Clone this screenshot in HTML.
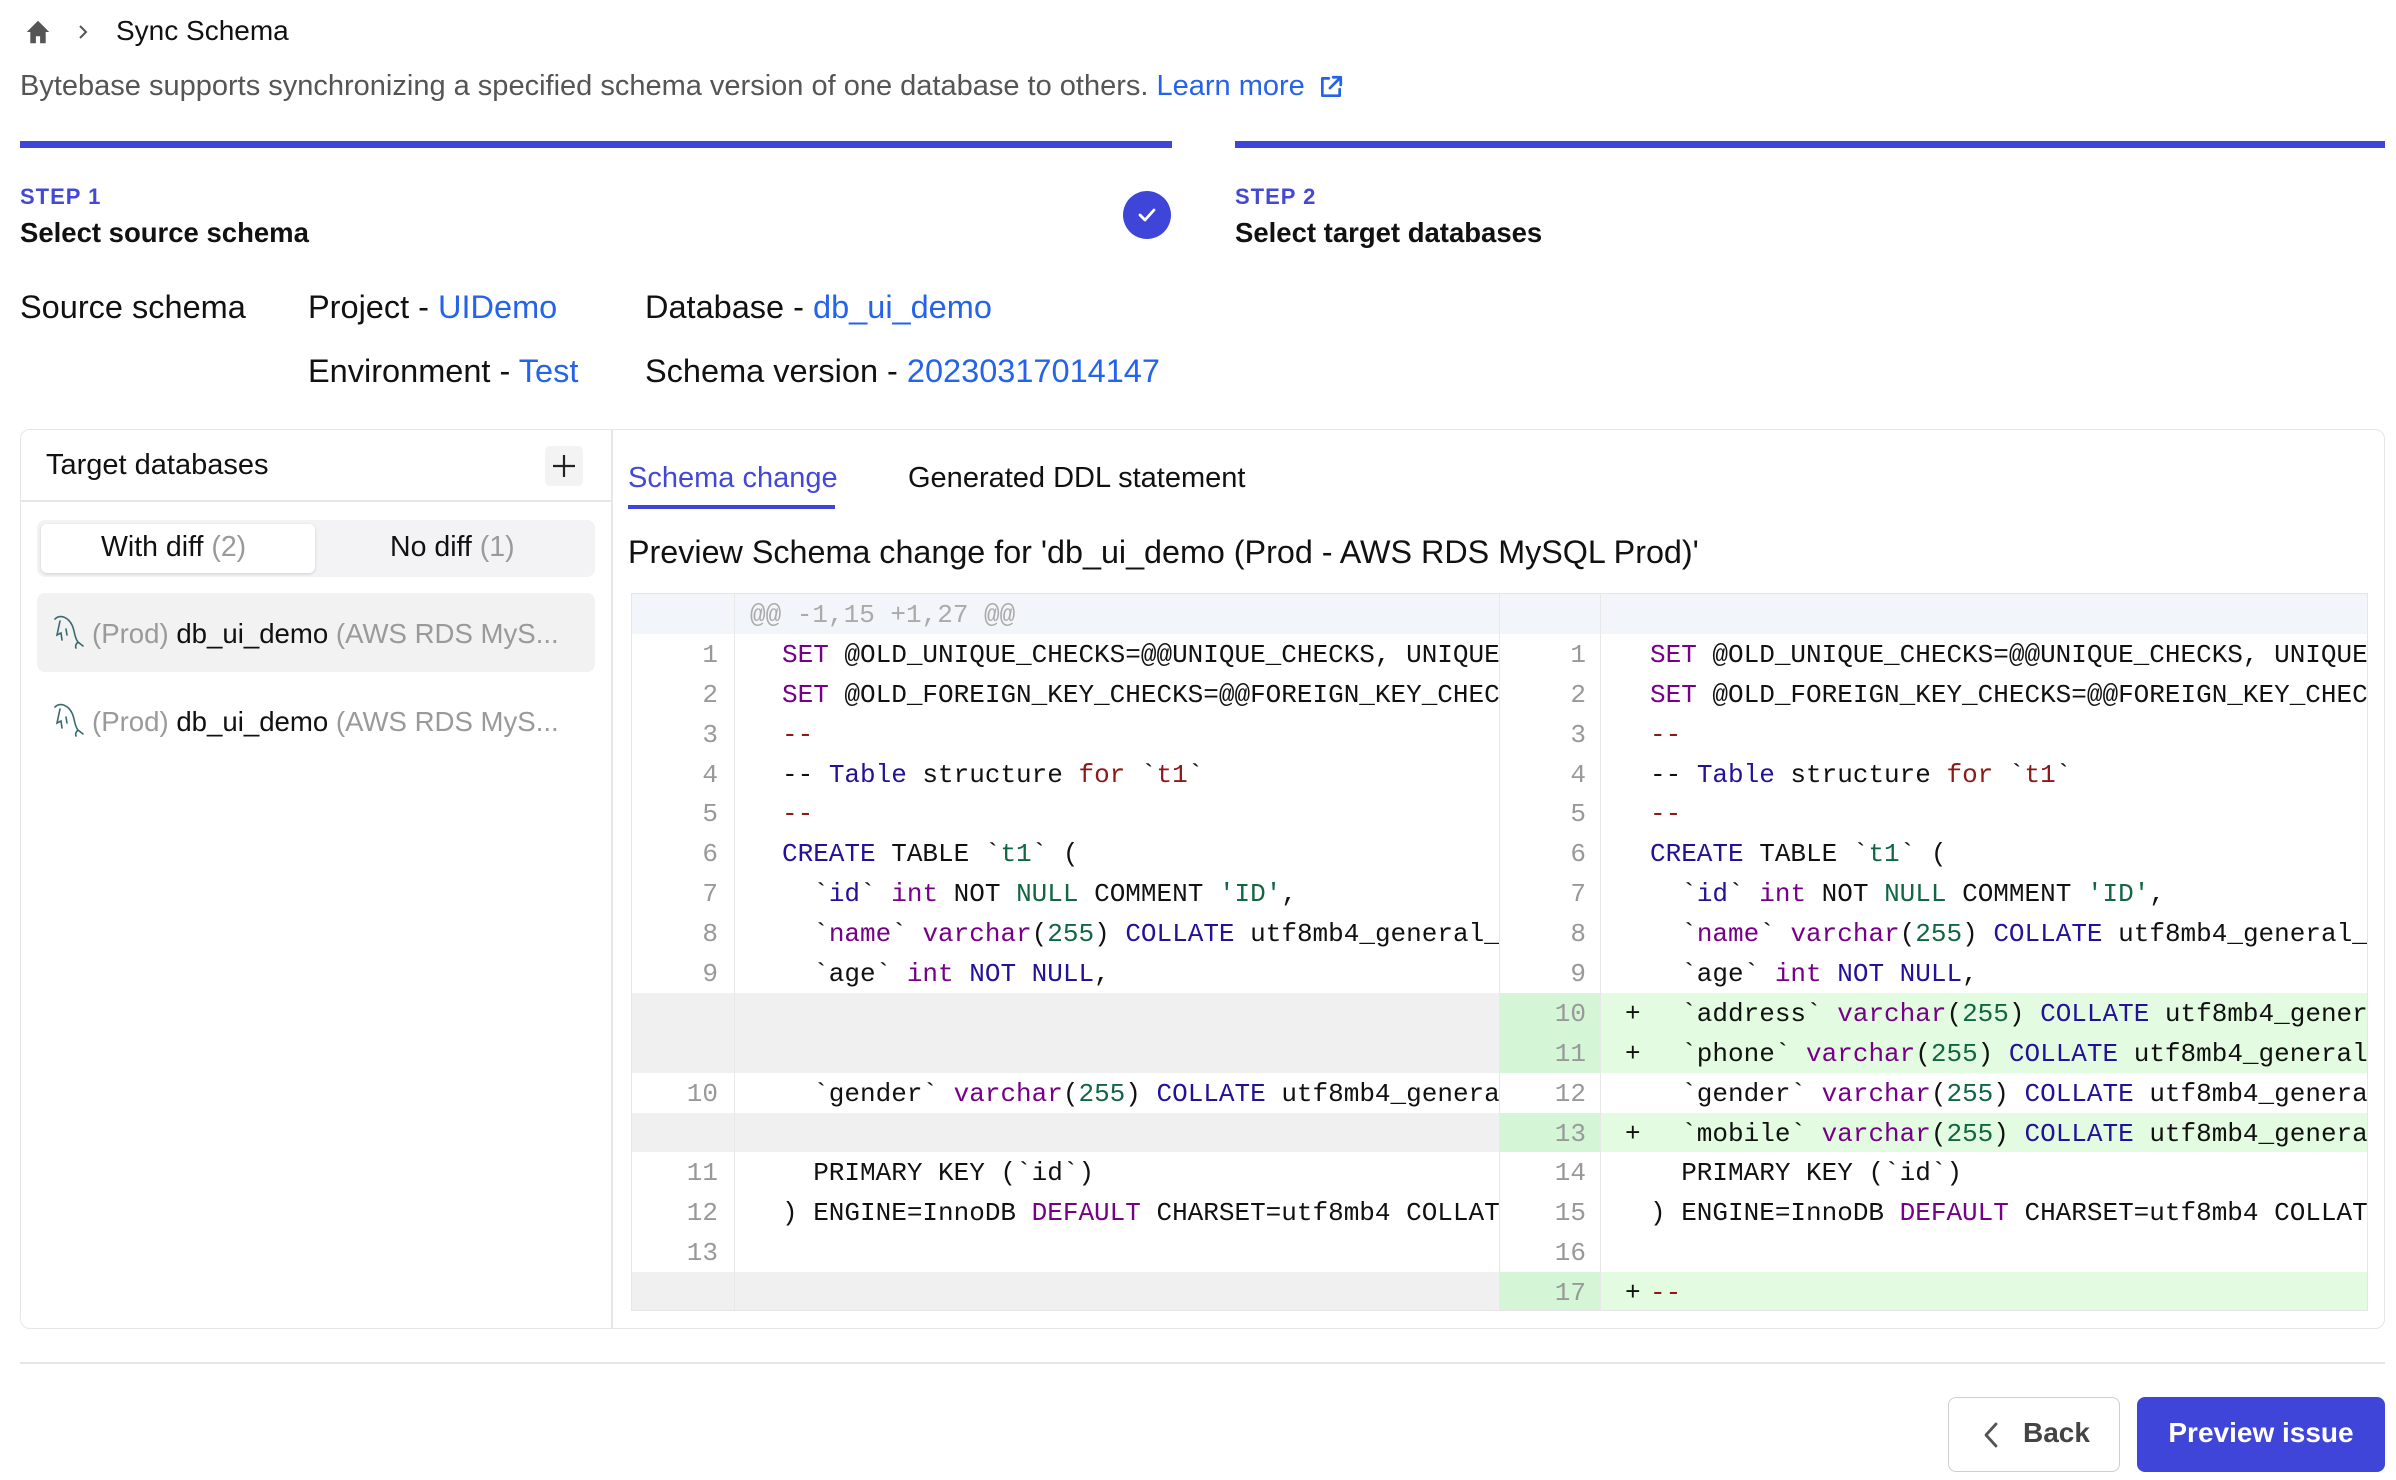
<!DOCTYPE html>
<html><head><meta charset="utf-8">
<style>
*{box-sizing:border-box;margin:0;padding:0}
body{width:2396px;height:1480px;background:#fff;font-family:"Liberation Sans",sans-serif;color:#111;position:relative;overflow:hidden}
.a{position:absolute;white-space:nowrap}
.blue{color:#2563eb}
.gray{color:#9a9a9a}
.code{position:absolute;left:631px;top:593px;width:1737px;height:718px;border:1px solid #e6e6e6;overflow:hidden;font-family:"Liberation Mono","DejaVu Sans Mono",monospace;font-size:26px}
.row{position:relative;height:39.9px;line-height:42px}
.c{position:absolute;top:0;height:100%;overflow:hidden;white-space:pre}
.gl{left:0;width:103px;text-align:right;padding-right:16px;color:#999;border-right:1px solid #e8e8e8}
.cl{left:103px;width:765px;padding-left:47px;border-right:1px solid #e8e8e8}
.gr{left:868px;width:101px;text-align:right;padding-right:14px;color:#999;border-right:1px solid #e8e8e8}
.cr{left:969px;width:770px;padding-left:49px}
.mk{position:absolute;left:24px}
.e{background:#f0f0f0}
.gG{background:#d4f5d6}
.cG{background:#e3fbe0}
.k{color:#770088}.b{color:#221199}.n{color:#116644}.s{color:#aa1111}.t{color:#116644}.d{color:#8b1a1a}
</style></head><body>

<svg class="a" style="left:24px;top:18px" width="28" height="28" viewBox="0 0 20 20"><path d="M10 2 L2 10 H4.5 V18 H8.5 V13 H11.5 V18 H15.5 V10 H18 Z" fill="#555"/></svg>
<svg class="a" style="left:76px;top:22px" width="14" height="20" viewBox="0 0 14 20"><path d="M4 4 L10 10 L4 16" stroke="#555" stroke-width="2" fill="none"/></svg>
<div class="a" style="left:116px;top:15px;font-size:28px">Sync Schema</div>

<div class="a" style="left:20px;top:70px;font-size:29px;color:#555">Bytebase supports synchronizing a specified schema version of one database to others. <span class="blue">Learn more</span></div>
<svg class="a" style="left:1318px;top:74px" width="26" height="26" viewBox="0 0 24 24"><path d="M10 4 H4 V20 H20 V14 M14 3 H21 V10 M21 3 L11 13" stroke="#2563eb" stroke-width="2.5" fill="none" stroke-linecap="round" stroke-linejoin="round"/></svg>

<div class="a" style="left:20px;top:141px;width:1152px;height:7px;background:#3f45d8"></div>
<div class="a" style="left:1235px;top:141px;width:1150px;height:7px;background:#3f45d8"></div>
<div class="a" style="left:20px;top:184px;font-size:22px;font-weight:bold;color:#4448d6;letter-spacing:1px">STEP 1</div>
<div class="a" style="left:20px;top:217px;font-size:27.5px;font-weight:bold">Select source schema</div>
<div class="a" style="left:1123px;top:191px;width:48px;height:48px;border-radius:50%;background:#3f45d8"></div>
<svg class="a" style="left:1135px;top:203px" width="24" height="24" viewBox="0 0 24 24"><path d="M5 12 L10 17 L19 7" stroke="#fff" stroke-width="2.8" fill="none" stroke-linecap="round" stroke-linejoin="round"/></svg>
<div class="a" style="left:1235px;top:184px;font-size:22px;font-weight:bold;color:#4448d6;letter-spacing:1px">STEP 2</div>
<div class="a" style="left:1235px;top:217px;font-size:27.5px;font-weight:bold">Select target databases</div>

<div class="a" style="left:20px;top:289px;font-size:32.5px">Source schema</div>
<div class="a" style="left:308px;top:289px;font-size:32.5px">Project - <span class="blue">UIDemo</span></div>
<div class="a" style="left:645px;top:289px;font-size:32.5px">Database - <span class="blue">db_ui_demo</span></div>
<div class="a" style="left:308px;top:353px;font-size:32.5px">Environment - <span class="blue">Test</span></div>
<div class="a" style="left:645px;top:353px;font-size:32.5px">Schema version - <span class="blue">20230317014147</span></div>

<div class="a" style="left:20px;top:429px;width:2365px;height:900px;border:1.5px solid #e6e6e6;border-radius:10px"></div>
<div class="a" style="left:611px;top:430px;width:1.5px;height:898px;background:#e6e6e6"></div>
<div class="a" style="left:21px;top:500px;width:590px;height:2px;background:#e6e6e6"></div>
<div class="a" style="left:46px;top:449px;font-size:29px">Target databases</div>
<div class="a" style="left:545px;top:446px;width:38px;height:40px;border-radius:5px;background:#f3f3f3"></div>
<svg class="a" style="left:551px;top:453px" width="26" height="26" viewBox="0 0 26 26"><path d="M13 2 V24 M2 13 H24" stroke="#222" stroke-width="2.2"/></svg>

<div class="a" style="left:37px;top:520px;width:558px;height:57px;border-radius:8px;background:#f3f3f5"></div>
<div class="a" style="left:41px;top:524px;width:274px;height:49px;border-radius:6px;background:#fff;box-shadow:0 1px 3px rgba(0,0,0,.15)"></div>
<div class="a" style="left:101px;top:531px;font-size:28.5px">With diff <span class="gray">(2)</span></div>
<div class="a" style="left:390px;top:531px;font-size:28.5px">No diff <span class="gray">(1)</span></div>

<div class="a" style="left:37px;top:593px;width:558px;height:79px;border-radius:8px;background:#f2f2f3"></div>
<svg class="a" style="left:52px;top:613px" width="36" height="36" viewBox="0 0 36 36"><path d="M3 6 C8 1 16 4 20 12 C23 18 22 24 26 29 L31 33 M26 29 C24 31 23 33 24 35 M8 8 L5 22 L9 20 L10 27 M14 16 L15 22" stroke="#3a6a70" stroke-width="1.6" fill="none" stroke-linecap="round"/></svg>
<div class="a" style="left:92px;top:618px;font-size:27.6px"><span class="gray">(Prod)</span> db_ui_demo <span class="gray">(AWS RDS MyS...</span></div>
<svg class="a" style="left:52px;top:701px" width="36" height="36" viewBox="0 0 36 36"><path d="M3 6 C8 1 16 4 20 12 C23 18 22 24 26 29 L31 33 M26 29 C24 31 23 33 24 35 M8 8 L5 22 L9 20 L10 27 M14 16 L15 22" stroke="#3a6a70" stroke-width="1.6" fill="none" stroke-linecap="round"/></svg>
<div class="a" style="left:92px;top:706px;font-size:27.6px"><span class="gray">(Prod)</span> db_ui_demo <span class="gray">(AWS RDS MyS...</span></div>

<div class="a" style="left:628px;top:462px;font-size:29px;color:#4448d6">Schema change</div>
<div class="a" style="left:628px;top:505px;width:207px;height:4px;background:#3f45d8"></div>
<div class="a" style="left:908px;top:462px;font-size:29px">Generated DDL statement</div>
<div class="a" style="left:628px;top:534px;font-size:32.3px">Preview Schema change for 'db_ui_demo (Prod - AWS RDS MySQL Prod)'</div>

<div class="code">
<div class="row" style="background:#f2f5fa"><div class="c gl"></div><div class="c cl" style="padding-left:15px;color:#aaa">@@ -1,15 +1,27 @@</div><div class="c gr"></div><div class="c cr"></div></div>
<div class="row"><div class="c gl">1</div><div class="c cl"><span class="k">SET</span> @OLD_UNIQUE_CHECKS=@@UNIQUE_CHECKS, UNIQUE_CHECKS=0;</div><div class="c gr">1</div><div class="c cr"><span class="k">SET</span> @OLD_UNIQUE_CHECKS=@@UNIQUE_CHECKS, UNIQUE_CHECKS=0;</div></div>
<div class="row"><div class="c gl">2</div><div class="c cl"><span class="k">SET</span> @OLD_FOREIGN_KEY_CHECKS=@@FOREIGN_KEY_CHECKS, FOREIGN</div><div class="c gr">2</div><div class="c cr"><span class="k">SET</span> @OLD_FOREIGN_KEY_CHECKS=@@FOREIGN_KEY_CHECKS, FOREIGN</div></div>
<div class="row"><div class="c gl">3</div><div class="c cl"><span class="d">--</span></div><div class="c gr">3</div><div class="c cr"><span class="d">--</span></div></div>
<div class="row"><div class="c gl">4</div><div class="c cl">-- <span class="b">Table</span> structure <span class="d">for</span> `<span class="d">t1</span>`</div><div class="c gr">4</div><div class="c cr">-- <span class="b">Table</span> structure <span class="d">for</span> `<span class="d">t1</span>`</div></div>
<div class="row"><div class="c gl">5</div><div class="c cl"><span class="d">--</span></div><div class="c gr">5</div><div class="c cr"><span class="d">--</span></div></div>
<div class="row"><div class="c gl">6</div><div class="c cl"><span class="b">CREATE</span> TABLE `<span class="t">t1</span>` (</div><div class="c gr">6</div><div class="c cr"><span class="b">CREATE</span> TABLE `<span class="t">t1</span>` (</div></div>
<div class="row"><div class="c gl">7</div><div class="c cl">  `<span class="b">id</span>` <span class="k">int</span> NOT <span class="n">NULL</span> COMMENT <span class="n">'ID'</span>,</div><div class="c gr">7</div><div class="c cr">  `<span class="b">id</span>` <span class="k">int</span> NOT <span class="n">NULL</span> COMMENT <span class="n">'ID'</span>,</div></div>
<div class="row"><div class="c gl">8</div><div class="c cl">  `<span class="k">name</span>` <span class="k">varchar</span>(<span class="n">255</span>) <span class="b">COLLATE</span> utf8mb4_general_ci</div><div class="c gr">8</div><div class="c cr">  `<span class="k">name</span>` <span class="k">varchar</span>(<span class="n">255</span>) <span class="b">COLLATE</span> utf8mb4_general_ci</div></div>
<div class="row"><div class="c gl">9</div><div class="c cl">  `age` <span class="k">int</span> <span class="b">NOT NULL</span>,</div><div class="c gr">9</div><div class="c cr">  `age` <span class="k">int</span> <span class="b">NOT NULL</span>,</div></div>
<div class="row"><div class="c gl e"></div><div class="c cl e"></div><div class="c gr gG">10</div><div class="c cr cG"><span class="mk">+</span>  `address` <span class="k">varchar</span>(<span class="n">255</span>) <span class="b">COLLATE</span> utf8mb4_general_ci</div></div>
<div class="row"><div class="c gl e"></div><div class="c cl e"></div><div class="c gr gG">11</div><div class="c cr cG"><span class="mk">+</span>  `phone` <span class="k">varchar</span>(<span class="n">255</span>) <span class="b">COLLATE</span> utf8mb4_general_ci</div></div>
<div class="row"><div class="c gl">10</div><div class="c cl">  `gender` <span class="k">varchar</span>(<span class="n">255</span>) <span class="b">COLLATE</span> utf8mb4_general_ci</div><div class="c gr">12</div><div class="c cr">  `gender` <span class="k">varchar</span>(<span class="n">255</span>) <span class="b">COLLATE</span> utf8mb4_general_ci</div></div>
<div class="row"><div class="c gl e"></div><div class="c cl e"></div><div class="c gr gG">13</div><div class="c cr cG"><span class="mk">+</span>  `mobile` <span class="k">varchar</span>(<span class="n">255</span>) <span class="b">COLLATE</span> utf8mb4_general_ci</div></div>
<div class="row"><div class="c gl">11</div><div class="c cl">  PRIMARY KEY (`id`)</div><div class="c gr">14</div><div class="c cr">  PRIMARY KEY (`id`)</div></div>
<div class="row"><div class="c gl">12</div><div class="c cl">) ENGINE=InnoDB <span class="k">DEFAULT</span> CHARSET=utf8mb4 COLLATE=utf8mb4</div><div class="c gr">15</div><div class="c cr">) ENGINE=InnoDB <span class="k">DEFAULT</span> CHARSET=utf8mb4 COLLATE=utf8mb4</div></div>
<div class="row"><div class="c gl">13</div><div class="c cl"></div><div class="c gr">16</div><div class="c cr"></div></div>
<div class="row"><div class="c gl e"></div><div class="c cl e"></div><div class="c gr gG">17</div><div class="c cr cG"><span class="mk">+</span><span class="d">--</span></div></div>
</div>

<div class="a" style="left:20px;top:1362px;width:2365px;height:2px;background:#e6e6e6"></div>
<div class="a" style="left:1948px;top:1397px;width:172px;height:75px;border:1.5px solid #cfcfcf;border-radius:8px"></div>
<svg class="a" style="left:1980px;top:1421px" width="22" height="28" viewBox="0 0 22 28"><path d="M16 3 L6 14 L16 25" stroke="#555" stroke-width="2.8" fill="none" stroke-linecap="round" stroke-linejoin="round"/></svg>
<div class="a" style="left:2023px;top:1417px;font-size:28px;font-weight:bold;color:#444">Back</div>
<div class="a" style="left:2137px;top:1397px;width:248px;height:75px;border-radius:8px;background:#3f45d8"></div>
<div class="a" style="left:2137px;top:1417px;width:248px;text-align:center;font-size:28px;font-weight:bold;color:#fff">Preview issue</div>
</body></html>
